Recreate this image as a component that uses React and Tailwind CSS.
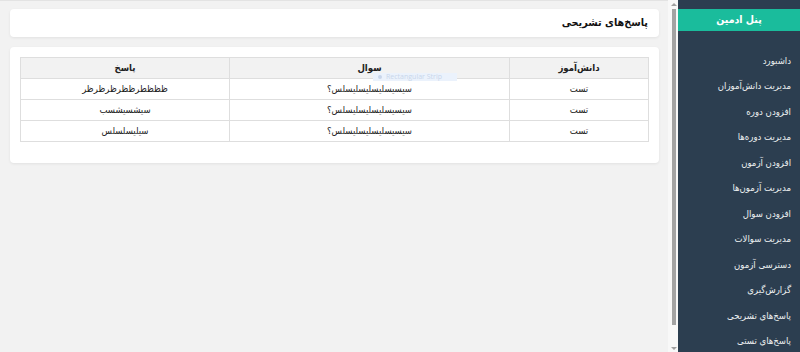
import React from "react";

const rows = [
  { s: "تست", q: "سیسیسلیسلیسلیسلس؟", a: "ظظظطرظظرظرظرظر" },
  { s: "تست", q: "سیسیسلیسلیسلیسلس؟", a: "سیشسیشسب" },
  { s: "تست", q: "سیسیسلیسلیسلیسلس؟", a: "سیلیسلسلس" },
];

const menu = [
  "داشبورد",
  "مدیریت دانش‌آموزان",
  "افزودن دوره",
  "مدیریت دوره‌ها",
  "افزودن آزمون",
  "مدیریت آزمون‌ها",
  "افزودن سوال",
  "مدیریت سوالات",
  "دسترسی آزمون",
  "گزارش‌گیری",
  "پاسخ‌های تشریحی",
  "پاسخ‌های تستی",
];

function Cell({ children, head }) {
  const base = "border border-[#dedede] py-[4px] text-center leading-[12px]";
  return head ? <th className={base + " font-bold"}>{children}</th> : <td className={base}>{children}</td>;
}

export default function App() {
  return (
    <div
      dir="rtl"
      className="flex h-[352px] w-[800px] overflow-hidden bg-[#f2f2f2] font-['DejaVu_Sans_Condensed','DejaVu_Sans',sans-serif] text-[#222]"
    >
      {/* sidebar */}
      <aside className="flex h-[352px] w-[132px] shrink-0">
        <nav className="w-[122px] bg-[#2c3e50] pt-[9px]">
          <div className="flex h-[22px] items-center justify-center bg-[#1abc9c] text-[10.5px] font-bold text-white">
            پنل ادمین
          </div>
          <ul className="mt-[17px]">
            {menu.map((m) => (
              <li key={m} className="flex h-[25.5px] items-center pr-[9px] text-[9.5px] text-[#ecf0f1]">
                {m}
              </li>
            ))}
          </ul>
        </nav>
        {/* scrollbar */}
        <div className="flex w-[10px] flex-col items-center bg-[#f8f8f8] pl-[1px]">
          <div className="mt-[3px] h-0 w-0 border-x-[3px] border-b-[3px] border-x-transparent border-b-[#a0a0a0]" />
          <div className="mt-[3px] h-[316px] w-[4px] bg-[#a3a3a3]" />
          <div className="mt-[22px] h-0 w-0 border-x-[3px] border-t-[3px] border-x-transparent border-t-[#a0a0a0]" />
        </div>
      </aside>

      {/* main */}
      <main className="relative flex-1 border-t border-[#e3e3e3] pl-[10px] pr-[9px] pt-[8px]">
        <div className="flex h-[28px] items-center rounded-[4px] bg-white px-[11px] shadow-[0_1px_3px_rgba(0,0,0,0.07)]">
          <h1 className="text-[10.75px] font-bold text-[#111]">پاسخ‌های تشریحی</h1>
        </div>

        <div className="mt-[10px] rounded-[4px] bg-white px-[10px] pb-[21px] pt-[10px] shadow-[0_1px_3px_rgba(0,0,0,0.07)]">
          <table className="w-full table-fixed border-collapse text-[9.5px]">
            <colgroup>
              <col className="w-[139px]" />
              <col className="w-[280px]" />
              <col />
            </colgroup>
            <thead>
              <tr className="bg-[#f2f2f2]">
                <Cell head>دانش‌آموز</Cell>
                <Cell head>سوال</Cell>
                <Cell head>پاسخ</Cell>
              </tr>
            </thead>
            <tbody>
              {rows.map((r, i) => (
                <tr key={i}>
                  <Cell>{r.s}</Cell>
                  <Cell>{r.q}</Cell>
                  <Cell>{r.a}</Cell>
                </tr>
              ))}
            </tbody>
          </table>
        </div>

        <div
          dir="ltr"
          className="absolute left-[373px] top-[72px] flex h-[8px] w-[84px] items-center gap-[4px] overflow-hidden bg-[#ebf2fc] pl-[5px] font-['Open_Sans',sans-serif] text-[7px] leading-[8px] text-[#c9d6ea]"
        >
          <span className="inline-block h-[4px] w-[4px] rounded-full bg-[#c9d6ea]" />
          <span>Rectangular Strip</span>
        </div>
      </main>
    </div>
  );
}
